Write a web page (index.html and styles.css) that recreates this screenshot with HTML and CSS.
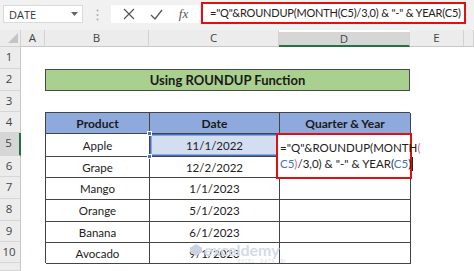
FILE: index.html
```html
<!DOCTYPE html>
<html lang="en">
<head>
    <meta charset="UTF-8">
    <title>ROUNDUP Quarter</title>
    <link rel="stylesheet" href="styles.css">
</head>
<body>
    <div class="fbar">
        <div class="namebox">
            <span>DATE</span>
            <svg width="7" height="4" viewBox="0 0 7 4"><path d="M0 0h7L3.5 4z" fill="#666"/></svg>
        </div>
        <div class="grip">
            <svg width="3" height="12" viewBox="0 0 3 12"><circle cx="1.5" cy="1.5" r="1" fill="#aaa"/><circle cx="1.5" cy="6" r="1" fill="#aaa"/><circle cx="1.5" cy="10.5" r="1" fill="#aaa"/></svg>
        </div>
        <div class="tools">
            <svg width="12" height="12" viewBox="0 0 12 12"><path d="M1 1l10 10M11 1L1 11" stroke="#555" stroke-width="1.2"/></svg>
            <svg width="13" height="11" viewBox="0 0 13 11"><path d="M1 6l4 4 7-9" stroke="#555" stroke-width="1.3" fill="none"/></svg>
            <span class="fx">fx</span>
        </div>
        <div class="formula">="Q"&amp;ROUNDUP(MONTH(C5)/3,0) &amp; "-" &amp; YEAR(C5)</div>
    </div>

    <div class="sheet">
        <div class="corner">
            <svg width="10" height="10" viewBox="0 0 10 10"><path d="M10 0v10H0z" fill="#c4c4c4"/></svg>
        </div>
        <div class="ch">A</div>
        <div class="ch">B</div>
        <div class="ch">C</div>
        <div class="ch active">D</div>
        <div class="ch">E</div>
        <div class="ch"></div>

        <div class="rownums">
            <div class="rh">1</div>
            <div class="rh">2</div>
            <div class="rh">3</div>
            <div class="rh">4</div>
            <div class="rh active">5</div>
            <div class="rh">6</div>
            <div class="rh">7</div>
            <div class="rh">8</div>
            <div class="rh">9</div>
            <div class="rh">10</div>
            <div class="rh"></div>
        </div>

        <div class="title">Using ROUNDUP Function</div>

        <div class="table">
            <div class="th">Product</div>
            <div class="th">Date</div>
            <div class="th">Quarter &amp; Year</div>

            <div class="td">Apple</div>
            <div class="td sel">11/1/2022</div>
            <div class="td"></div>

            <div class="td">Grape</div>
            <div class="td">12/2/2022</div>
            <div class="td"></div>

            <div class="td">Mango</div>
            <div class="td">1/1/2023</div>
            <div class="td"></div>

            <div class="td">Orange</div>
            <div class="td">5/1/2023</div>
            <div class="td"></div>

            <div class="td">Banana</div>
            <div class="td">6/1/2023</div>
            <div class="td"></div>

            <div class="td">Avocado</div>
            <div class="td">9/1/2023</div>
            <div class="td"></div>
        </div>

        <!-- cell D5 in edit mode, text spills over D6 -->
        <div class="edit">
            ="Q"&amp;ROUNDUP(MONTH<span class="pk">(</span><br><span class="ref">C5</span><span class="pk">)</span>/3,0) &amp; "-" &amp; YEAR(<span class="ref">C5</span>)<span class="caret"></span>
        </div>

        <div class="wm">
            <div class="wm-name">
                <svg width="12" height="12" viewBox="0 0 13 13"><path d="M6.5 0L13 4v5l-6.5 4L0 9V4z" fill="#c9d3e4"/></svg>
                <span>exceldemy</span>
            </div>
            <div class="wm-sub">EXCEL · DATA · BI</div>
        </div>
    </div>
</body>
</html>
```

FILE: styles.css
```css
body {
    margin: 0;
    width: 474px;
    height: 271px;
    overflow: hidden;
    background: #fff;
    font-family: "Open Sans", sans-serif;
}
.fbar {
    height: 30px;
    background: #f1f1f1;
    display: flex;
    align-items: flex-start;
    padding-top: 2px;
    box-sizing: border-box;
}
.namebox {
    margin: 3px 0 0 3px;
    width: 80px;
    height: 18px;
    background: #fff;
    border: 1px solid #dadada;
    box-sizing: border-box;
    display: flex;
    align-items: center;
    justify-content: space-between;
    padding: 0 4px 0 5px;
    font-size: 11px;
    color: #333;
}
.grip {
    width: 28px;
    display: flex;
    justify-content: center;
    padding-top: 7px;
}
.tools {
    margin-top: 3px;
    width: 89px;
    height: 18px;
    background: #fff;
    display: flex;
    align-items: center;
    justify-content: space-around;
    padding: 0 4px;
    box-sizing: border-box;
}
.fx {
    font-family: "Liberation Serif", serif;
    font-style: italic;
    font-size: 13px;
    color: #555;
}
.formula {
    margin-left: 1px;
    width: 265px;
    height: 22px;
    border: 2px solid #e01010;
    box-sizing: border-box;
    background: #fff;
    font-family: "Lato", sans-serif;
    font-size: 11px;
    letter-spacing: -0.2px;
    line-height: 18px;
    padding-left: 7px;
    color: #222;
    white-space: nowrap;
    overflow: hidden;
}

/* spreadsheet grid */
.sheet {
    --rows: 22px 22px 21px 21px 23px 21px 22px 22px 21px 21px 8px;
    position: relative;
    display: grid;
    grid-template-columns: 21px 24px 104px 130px 131px 54px 10px;
    grid-template-rows: 17px var(--rows);
}
.corner {
    background: #ececec;
    border-right: 1px solid #d2d2d2;
    border-bottom: 1px solid #d2d2d2;
    display: flex;
    align-items: flex-end;
    justify-content: flex-end;
    padding: 0 2px 3px 0;
}
.ch {
    background: #ececec;
    border-right: 1px solid #d2d2d2;
    border-bottom: 1px solid #c8c8c8;
    font-size: 11.5px;
    color: #444;
    text-align: center;
    line-height: 16px;
}
.ch.active {
    background: #d6d6d6;
    border-bottom: 2px solid #217346;
    margin-top: 2px;
    line-height: 13px;
}
.rownums {
    grid-column: 1;
    grid-row: 2 / 13;
    display: grid;
    grid-template-rows: var(--rows);
}
.rh {
    background: #ececec;
    border-right: 1px solid #c8c8c8;
    border-bottom: 1px solid #d6d6d6;
    font-size: 11.5px;
    color: #444;
    text-align: center;
    line-height: 20px;
    padding-right: 2px;
}
.rh.active {
    background: #d6d6d6;
    border-right: 2px solid #217346;
}
.title {
    grid-column: 3 / 6;
    grid-row: 3;
    background: #a9d08e;
    border: 1px solid #4a4a4a;
    font-family: "Lato", sans-serif;
    font-weight: bold;
    font-size: 13px;
    color: #1a1a1a;
    display: flex;
    align-items: center;
    justify-content: center;
}
.table {
    grid-column: 3 / 6;
    grid-row: 5 / 12;
    display: grid;
    grid-template-columns: 104px 130px 131px;
    grid-template-rows: 21px 23px 21px 22px 22px 21px 21px;
    border-left: 1px solid #444;
    border-top: 1px solid #444;
    font-family: "Lato", sans-serif;
    font-size: 11.5px;
    color: #222;
}
.th, .td {
    border-right: 1px solid #444;
    border-bottom: 1px solid #444;
    display: flex;
    align-items: center;
    justify-content: center;
}
.th {
    background: #8ea9db;
    font-weight: bold;
    font-size: 12px;
    color: #1a1a1a;
}
.td.sel {
    position: relative;
    background: #d3def1;
    box-shadow: inset 0 0 0 1.5px #4472c4;
}
.td.sel::before, .td.sel::after {
    content: "";
    position: absolute;
    left: -3px;
    width: 5px;
    height: 5px;
    background: #4472c4;
    border: 1px solid #fff;
    box-sizing: border-box;
}
.td.sel::before { top: -3px; }
.td.sel::after { bottom: -3px; }

.edit {
    position: absolute;
    left: 276px;
    top: 103px;
    width: 136px;
    height: 46px;
    box-sizing: border-box;
    border: 2.5px solid #e01010;
    background: #fff;
    font-family: "Lato", sans-serif;
    font-size: 11.5px;
    line-height: 16px;
    color: #222;
    padding: 5px 0 0 2px;
    white-space: nowrap;
}
.ref { color: #4472c4; }
.pk { color: #e05a7a; }
.caret {
    display: inline-block;
    width: 1px;
    height: 14px;
    background: #222;
    vertical-align: -3px;
    margin-left: 1px;
}
.wm {
    position: absolute;
    left: 190px;
    top: 212px;
}
.wm-name {
    display: flex;
    align-items: center;
    gap: 2px;
    font-family: "Lato", sans-serif;
    font-size: 16px;
    font-weight: bold;
    color: #d3dbe8;
    line-height: 15px;
}
.wm-sub {
    font-size: 5px;
    color: #d3dbe8;
    margin: 1px 0 0 48px;
    letter-spacing: 0.5px;
}
```
